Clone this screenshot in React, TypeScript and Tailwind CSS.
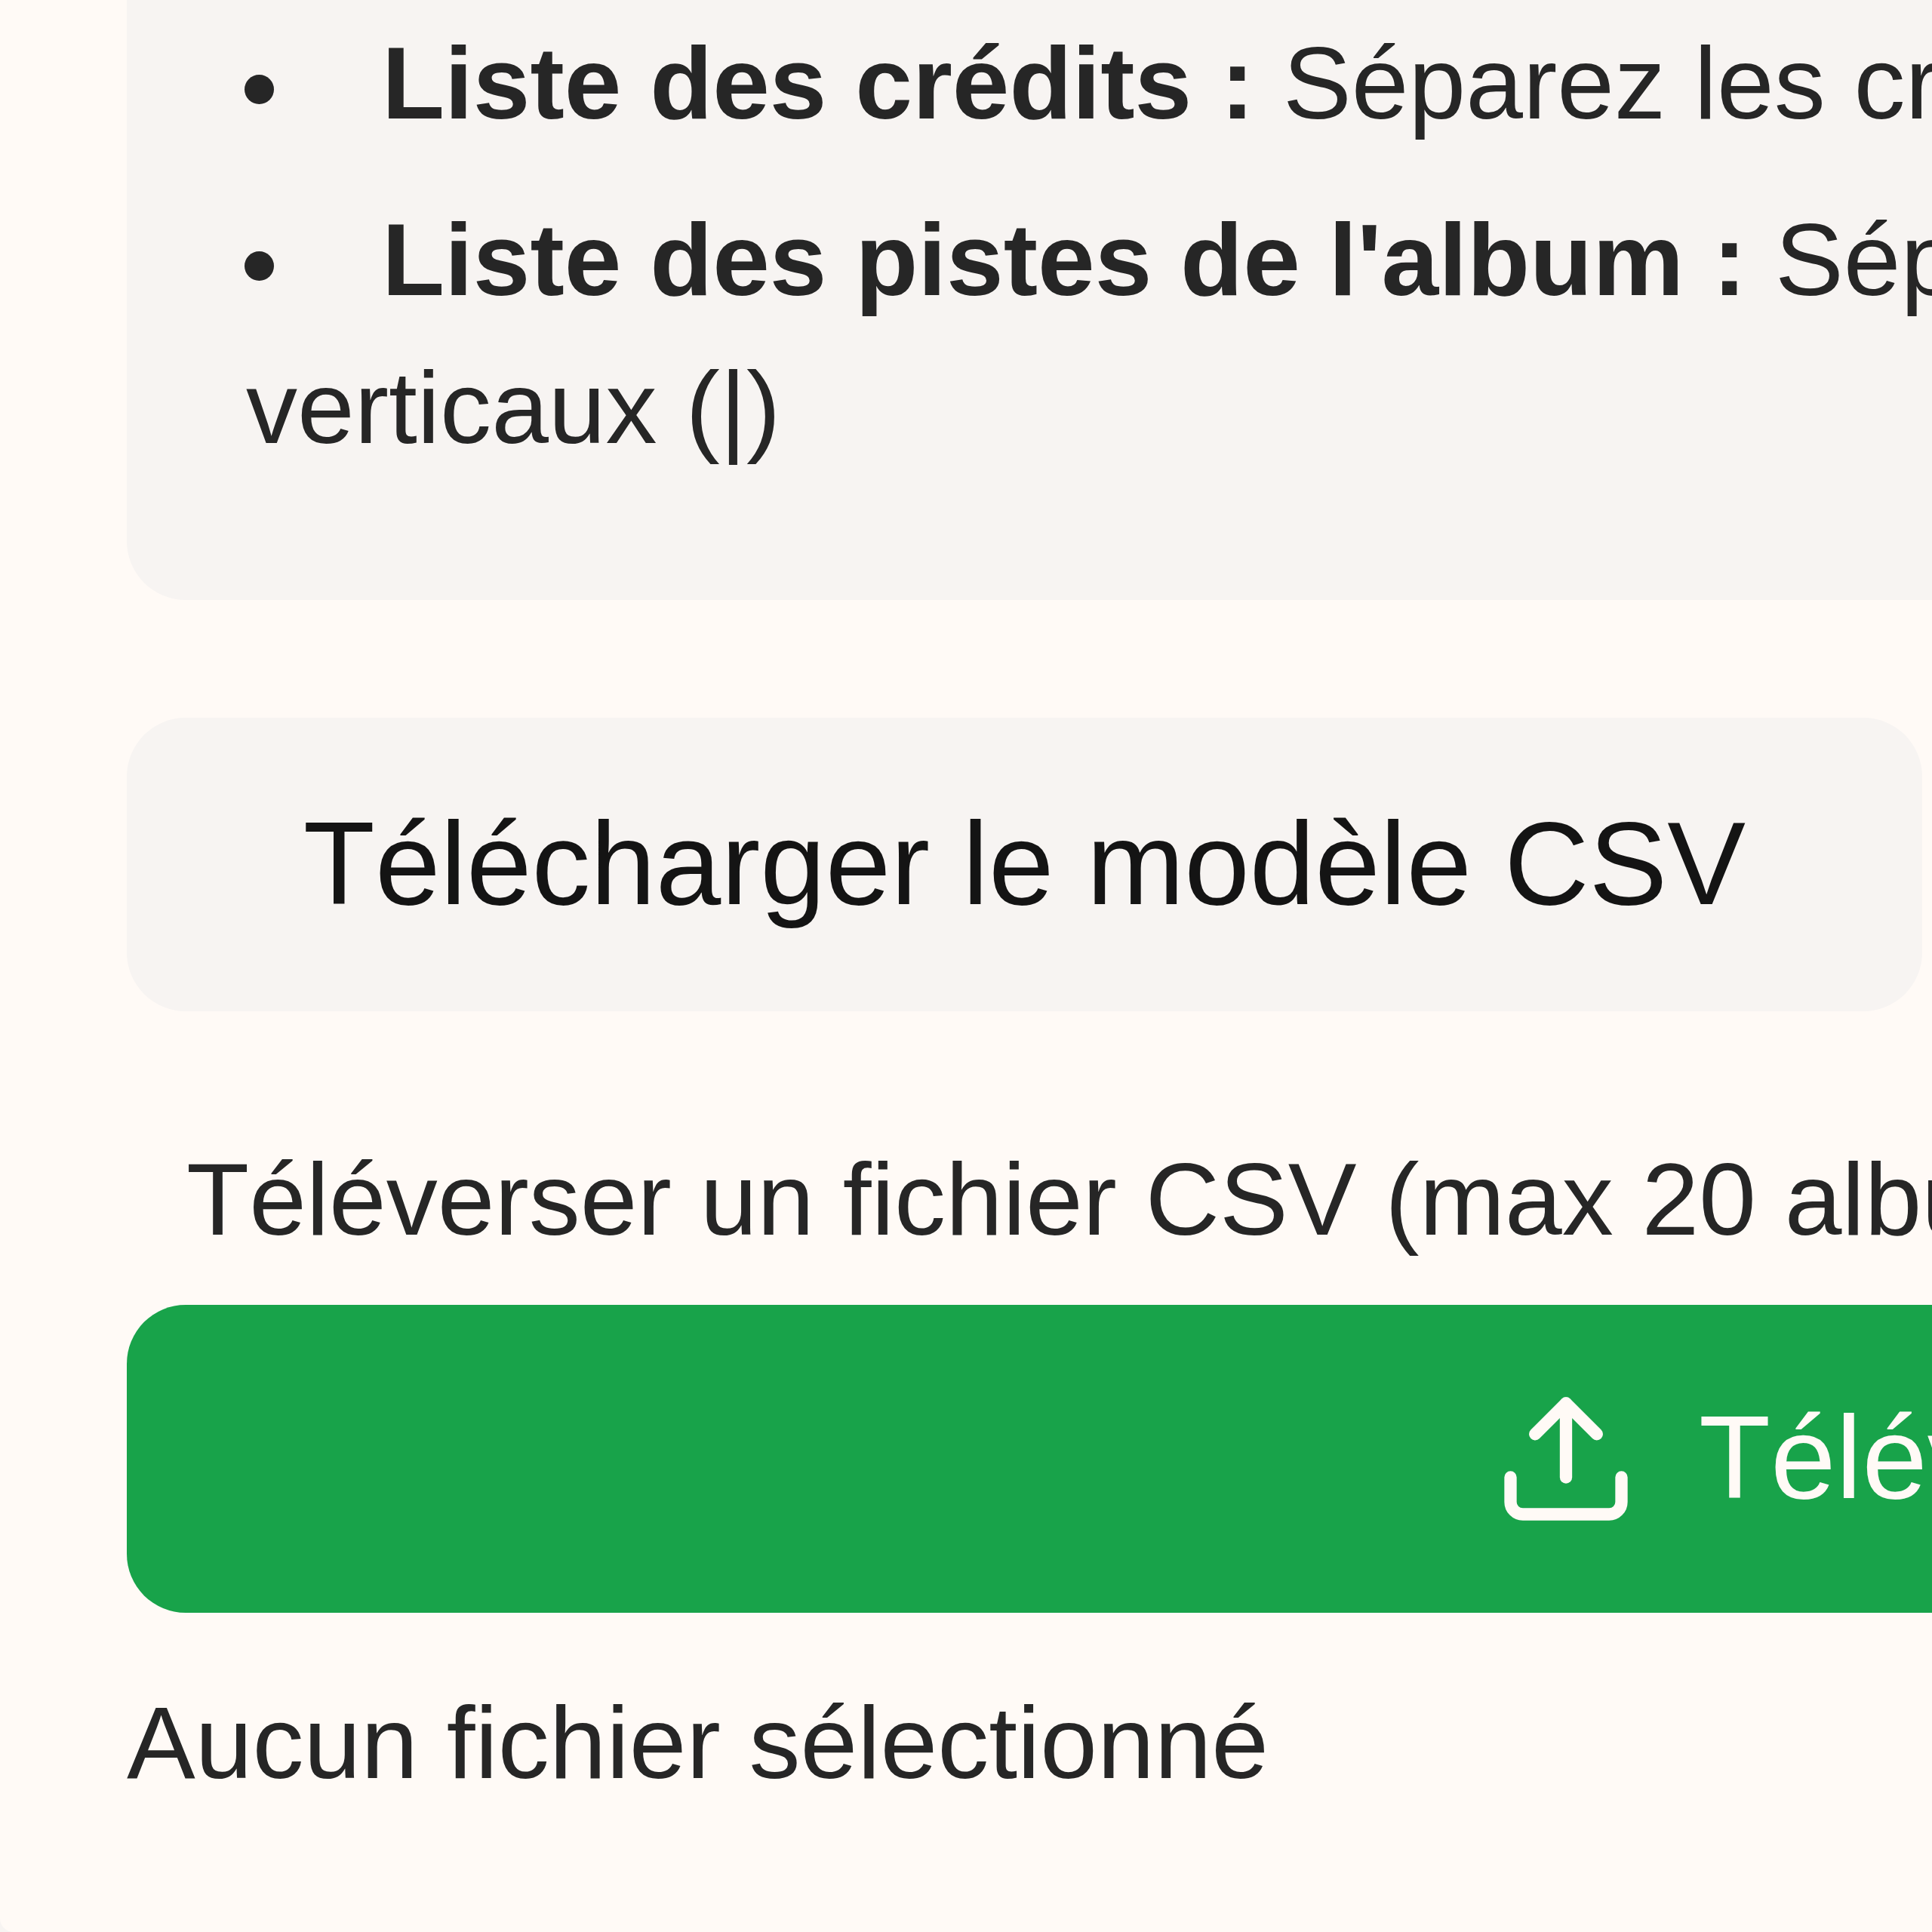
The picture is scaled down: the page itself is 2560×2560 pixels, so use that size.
import React from 'react';
import { Upload } from 'lucide-react';

interface Hint {
  label: string;
  text: string;
}

const hints: Hint[] = [
  { label: 'Liste des crédits :', text: 'Séparez les crédits' },
  { label: "Liste des pistes de l'album :", text: 'Séparez' },
];

// --- Single instruction line with its bullet ---
const HintItem = ({ hint }: { hint: Hint }) => (
  <li className="whitespace-nowrap">
    <span className="inline-block size-[39px] mr-[143px] rounded-full bg-[#262626] align-[19px]" />
    <strong className="font-bold tracking-[-0.05px]">{hint.label}</strong> {hint.text}
  </li>
);

const App = () => {
  return (
    <div className="w-[2560px] h-[2560px] overflow-hidden bg-[#f7f4f2]">
      <div className="h-full rounded-bl-[18px] bg-[#fffaf6] pl-[168px] font-['Liberation_Sans',Arial,sans-serif] text-[136.1px] leading-[195.6px] text-[#262626]">
        {/* --- Instructions --- */}
        <div className="h-[795px] w-[3000px] pl-[156px] pt-[13px] rounded-bl-[78px] bg-[#f7f4f2]">
          <ul className="space-y-[38.4px]">
            {hints.map((hint) => (
              <HintItem key={hint.label} hint={hint} />
            ))}
          </ul>
          <p className="pl-0.5">verticaux (|)</p>
        </div>

        <button className="mt-[156px] flex h-[389px] w-[2379px] items-center justify-center rounded-[78px] bg-[#f7f4f2] pb-0.5 text-[155.6px] leading-[235px] whitespace-nowrap text-[#141414]">
          Télécharger le modèle CSV
        </button>

        {/* --- Upload --- */}
        <p className="mt-[152px] pl-[79px] whitespace-nowrap">Téléverser un fichier CSV (max 20 albums)</p>
        <button className="mt-[41.4px] flex h-[408px] w-[4400px] items-center gap-[78px] rounded-[78px] bg-[#18a34a] pl-[1809px] text-[155.6px] leading-[235px] whitespace-nowrap text-[#fffaf6]">
          <Upload className="size-[196px]" strokeWidth={2} />
          <span className="pb-0.5">Téléverser</span>
        </button>
        <p className="mt-[75px]">Aucun fichier sélectionné</p>
      </div>
    </div>
  );
};

export default App;
